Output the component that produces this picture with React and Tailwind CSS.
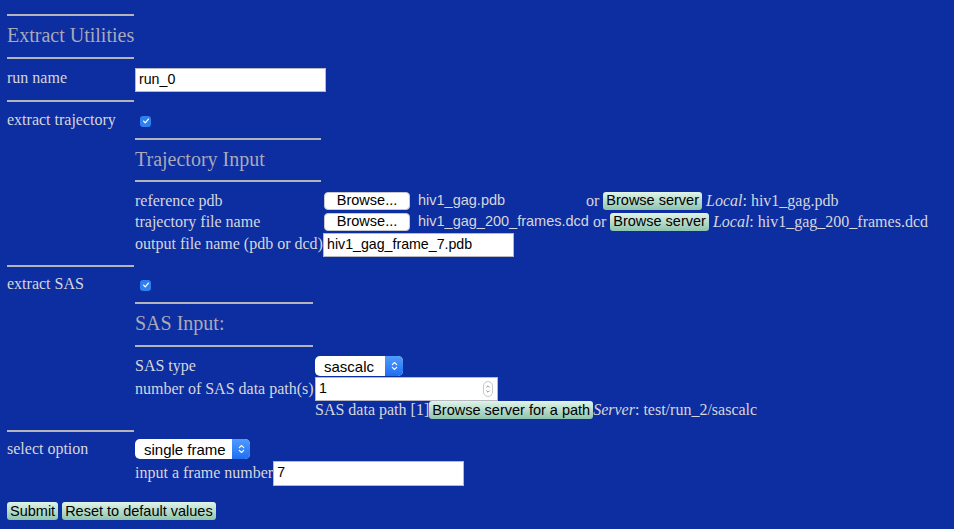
import React from 'react'

const SERIF = "font-['Liberation_Serif','Times_New_Roman',serif]"
const SANS = "font-['Liberation_Sans',Arial,sans-serif]"

function Rule({ w }) {
    return <div className={`h-[2px] bg-[#b4b4bc] ${w}`}></div>
}

function Check() {
    return (
        <span className="inline-flex items-center justify-center w-[11px] h-[11px] rounded-[3px] bg-[#2f7fef]">
            <svg viewBox="0 0 10 10" className="w-[8px] h-[8px]">
                <path d="M2 5.2 L4.1 7.3 L8 2.6" fill="none" stroke="white" strokeWidth="1.6" strokeLinecap="round" strokeLinejoin="round" />
            </svg>
        </span>
    )
}

function GreenButton({ children, className = '' }) {
    return (
        <span
            className={`inline-flex items-center h-[18px] px-[3px] rounded-[3px] bg-gradient-to-b from-[#e0f4ea] to-[#8ec4ad] text-black text-[14.5px] leading-none ${SANS} ${className}`}
        >
            {children}
        </span>
    )
}

function FileButton() {
    return (
        <span
            className={`inline-flex items-center justify-center w-[86px] h-[18px] rounded-[4px] bg-white border border-[#c8c8cc] text-black text-[14.5px] leading-none ${SANS}`}
        >
            Browse...
        </span>
    )
}

function TextBox({ value, w, h = 'h-[24px]', spinner }) {
    return (
        <span
            className={`relative inline-flex items-center ${w} ${h} bg-white border border-[#b8b8c0] pl-[3px] text-black text-[14.2px] ${SANS}`}
        >
            {value}
            {spinner && (
                <span className="absolute right-[4px] top-[3px] flex flex-col items-center justify-center w-[10px] h-[16px] rounded-full border border-[#c8c8cc]">
                    <svg viewBox="0 0 10 16" className="w-[8px] h-[14px]">
                        <path d="M3 6 L5 4 L7 6 M3 10 L5 12 L7 10" fill="none" stroke="#777" strokeWidth="1" />
                    </svg>
                </span>
            )}
        </span>
    )
}

function Select({ value, w }) {
    return (
        <span
            className={`inline-flex items-stretch ${w} h-[20px] rounded-[5px] bg-white overflow-hidden text-black text-[15px] ${SANS}`}
        >
            <span className="flex-1 flex items-center pl-[9px] leading-none">{value}</span>
            <span className="w-[18px] flex items-center justify-center bg-gradient-to-b from-[#4f9bff] to-[#1f6ef2]">
                <svg viewBox="0 0 10 16" className="w-[9px] h-[14px]">
                    <path d="M2.5 6.5 L5 4 L7.5 6.5 M2.5 9.5 L5 12 L7.5 9.5" fill="none" stroke="white" strokeWidth="1.3" strokeLinecap="round" strokeLinejoin="round" />
                </svg>
            </span>
        </span>
    )
}

function Local({ name }) {
    return (
        <span className="ml-[4px]">
            <i>Local</i>: {name}
        </span>
    )
}

export default function App() {
    return (
        <div className={`min-h-[529px] w-full bg-[#0c2ea0] text-[#d6d6de] text-[16px] ${SERIF} pl-[7px] pt-[14px]`}>
            {/* title */}
            <Rule w="w-[127px]" />
            <div className="h-[41px] flex items-center pb-[4px] text-[20px] text-[#a9a9b9]">Extract Utilities</div>
            <Rule w="w-[127px]" />

            {/* run name */}
            <div className="flex h-[41px] items-center">
                <div className="w-[128px] -mt-[3px]">run name</div>
                <TextBox value="run_0" w="w-[191px]" />
            </div>
            <Rule w="w-[127px]" />

            {/* extract trajectory */}
            <div className="flex h-[36px] items-center">
                <div className="w-[128px] -mt-[1px]">extract trajectory</div>
                <span className="ml-[5px]"><Check /></span>
            </div>
            <div className="pl-[128px]">
                <Rule w="w-[186px]" />
                <div className="h-[40px] flex items-center pb-[2px] text-[20px] text-[#a9a9b9]">Trajectory Input</div>
                <Rule w="w-[186px]" />
                <div className="flex flex-col pt-[8px] leading-[21px]">
                    <div className="flex items-center h-[21px]">
                        <div className="w-[189px]">reference pdb</div>
                        <div className={`w-[262px] flex items-center ${SANS} text-[14.5px]`}>
                            <FileButton />
                            <span className="ml-[8px]">hiv1_gag.pdb</span>
                        </div>
                        <span>or</span>
                        <GreenButton className="ml-[4px]">Browse server</GreenButton>
                        <Local name="hiv1_gag.pdb" />
                    </div>
                    <div className="flex items-center h-[21px]">
                        <div className="w-[189px]">trajectory file name</div>
                        <FileButton />
                        <span className={`ml-[8px] ${SANS} text-[14.5px]`}>hiv1_gag_200_frames.dcd</span>
                        <span className="ml-[4px]">or</span>
                        <GreenButton className="ml-[4px]">Browse server</GreenButton>
                        <Local name="hiv1_gag_200_frames.dcd" />
                    </div>
                    <div className="flex items-center h-[25px]">
                        <div className="w-[188px] -mt-[2px]">output file name (pdb or dcd)</div>
                        <TextBox value="hiv1_gag_frame_7.pdb" w="w-[191px]" h="h-[24px]" />
                    </div>
                </div>
            </div>
            <div className="mt-[8px]">
                <Rule w="w-[127px]" />
            </div>

            {/* extract SAS */}
            <div className="flex h-[35px] items-center">
                <div className="w-[128px] -mt-[1px]">extract SAS</div>
                <span className="ml-[5px] -mt-[1px]"><Check /></span>
            </div>
            <div className="pl-[128px]">
                <Rule w="w-[178px]" />
                <div className="h-[41px] flex items-center pb-[4px] text-[20px] text-[#a9a9b9]">SAS Input:</div>
                <Rule w="w-[178px]" />
                <div className="flex flex-col pt-[8px]">
                    <div className="flex items-center h-[22px]">
                        <div className="w-[180px] -mt-[1px]">SAS type</div>
                        <Select value="sascalc" w="w-[88px]" />
                    </div>
                    <div className="flex items-center h-[24px]">
                        <div className="w-[180px]">number of SAS data path(s)</div>
                        <TextBox value="1" w="w-[183px]" spinner />
                    </div>
                    <div className="flex items-center h-[18px] pl-[180px]">
                        <span>SAS data path [1]</span>
                        <GreenButton className="h-[17px]">Browse server for a path</GreenButton>
                        <span>
                            <i>Server</i>: test/run_2/sascalc
                        </span>
                    </div>
                </div>
            </div>
            <div className="mt-[11px]">
                <Rule w="w-[127px]" />
            </div>

            {/* select option */}
            <div className="flex items-center h-[22px] mt-[6px]">
                <div className="w-[128px]">select option</div>
                <Select value="single frame" w="w-[115px]" />
            </div>
            <div className="flex items-center h-[26px] pl-[128px]">
                <span>input a frame number</span>
                <TextBox value="7" w="w-[191px]" h="h-[25px]" />
            </div>

            {/* actions */}
            <div className="flex gap-[4px] mt-[16px] pb-[9px]">
                <GreenButton className="px-[2px]">Submit</GreenButton>
                <GreenButton className="px-[2px]">Reset to default values</GreenButton>
            </div>
        </div>
    )
}
